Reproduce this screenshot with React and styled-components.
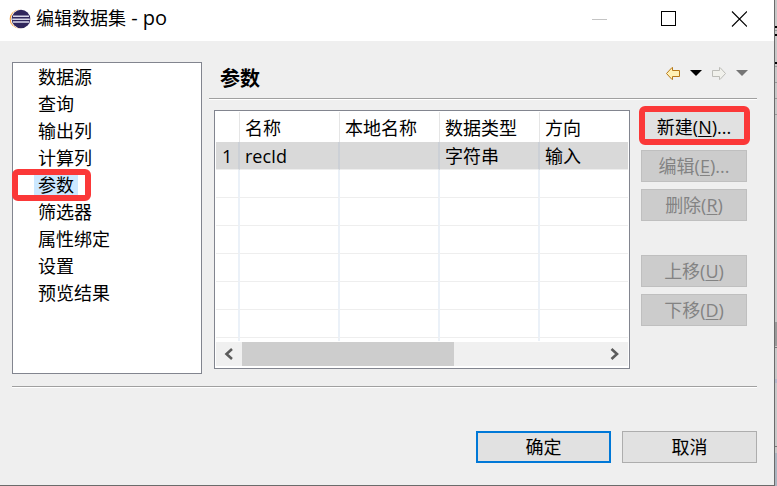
import React from 'react';
import styled, { createGlobalStyle, css } from 'styled-components';

const GlobalStyle = createGlobalStyle`
  *, *::before, *::after { box-sizing: border-box; }
  body {
    margin: 0;
    background: #c8c8c8;
    color: #000;
    font: 18px/24px "Open Sans", "Noto Sans CJK SC", sans-serif;
  }
  button { font: inherit; color: inherit; margin: 0; padding: 0; }
  ul { list-style: none; margin: 0; padding: 0; }
  u { text-underline-offset: 2px; text-decoration-thickness: 1px; }
`;

const Screen = styled.div`
  display: flex;
  min-height: 100vh;
`;

const Dialog = styled.section`
  flex: 1;
  min-width: 0;
  display: flex;
  flex-direction: column;
  background: #efefef;
  border: solid #6b6b6b;
  border-width: 0 1px 1px 0;
`;

const Backdrop = styled.div`
  width: 2px;
  background: linear-gradient(
    #c8c8c8 26px, #000 26px 28px, #c8c8c8 28px 30px, #999 30px 31px,
    #c8c8c8 31px 34px, #000 34px 36px, #c8c8c8 36px 62px, #000 62px 64px,
    #c8c8c8 64px 66px, #999 66px 67px, #c8c8c8 67px 82px, #999 82px 83px,
    #c8c8c8 83px 98px, #999 98px 99px, #c8c8c8 99px 114px, #999 114px 115px,
    #c8c8c8 115px 322px, #999 322px 346px, #c8c8c8 346px 347px, #777 347px 348px,
    #c8c8c8 348px 379px, #b4b8cc 379px 383px, #c8c8c8 383px 446px,
    #777 446px 447px, #c8c8c8 447px 453px, #abb5c0 453px
  );
`;

const TitleBar = styled.header`
  display: flex;
  align-items: center;
  height: 41px;
  padding: 0 27px 4px 9px;
  background: #fff;
`;

const TitleText = styled.h1`
  flex: 1;
  margin: 0 0 0 5px;
  padding-bottom: 2px;
  font-size: 18px;
  font-weight: 400;
`;

const DataSetName = styled.span`
  font-size: 20px;
  white-space: pre;
`;

const WindowControls = styled.div`
  display: flex;
  align-items: center;
  gap: 40px;
`;

const IconButton = styled.button`
  display: block;
  border: 0;
  background: none;
  line-height: 0;
  svg { display: block; }
`;

const Content = styled.div`
  flex: 1;
  display: flex;
  padding: 0 17px 12px 12px;
`;

const PageList = styled.ul`
  width: 190px;
  margin-top: 21px;
  padding: 1px 0 14px 21px;
  background: #fff;
  border: 1px solid #82858f;
`;

const highlight = css`
  &::after {
    content: '';
    position: absolute;
    border: 6px solid #fb3838;
    border-radius: 6px;
    pointer-events: none;
  }
`;

const PageItem = styled.button`
  display: block;
  position: relative;
  height: 27px;
  padding: 0 4px 1px;
  border: 0;
  background: ${(p) => (p.$selected ? '#cce8ff' : 'none')};
  ${(p) => p.$selected && highlight}
  &::after { inset: -3px -13px -2px -22px; }
`;

const Panel = styled.main`
  flex: 1;
  min-width: 0;
  margin-left: 7px;
  display: flex;
  flex-direction: column;
`;

const PanelHeader = styled.div`
  display: flex;
  align-items: center;
  justify-content: space-between;
  height: 59px;
  padding: 18px 9px 0 11px;
  border-bottom: 1px solid #fff;
  box-shadow: inset 0 -1px #a0a0a0;
`;

const PanelTitle = styled.h2`
  margin: 0;
  font-size: 20px;
  font-weight: 700;
`;

const History = styled.div`
  display: flex;
  align-items: center;
  gap: 10px;
  margin-bottom: 12px;
`;

const PanelBody = styled.div`
  flex: 1;
  display: flex;
  gap: 11px;
  padding: 10px 10px 5px 5px;
`;

const Grid = styled.div`
  flex: 1;
  min-width: 0;
  display: flex;
  flex-direction: column;
  justify-content: space-between;
  padding: 1px 1px 2px;
  background: #fff;
  border: 1px solid #82858f;
`;

const Table = styled.table`
  width: 100%;
  table-layout: fixed;
  border-collapse: separate;
  border-spacing: 0;
`;

const Col = styled.col`
  width: ${(p) => (p.$width ? `${p.$width}px` : 'auto')};
`;

const HeadCell = styled.th`
  height: 30px;
  padding: 1px 0 0 5px;
  font-weight: 400;
  text-align: left;
  white-space: nowrap;
  border-right: 1px solid #e5e5e5;
  &:last-child { border-right: 0; }
`;

const Cell = styled.td`
  height: ${(p) => (p.$filler ? 3 : 28)}px;
  padding: 0 0 0 5px;
  background: ${(p) => (p.$selected ? '#d9d9d9' : '#fff')};
  border-right: 2px solid ${(p) => (p.$selected ? '#ccd0d6' : '#ebf1f8')};
  border-bottom: ${(p) => (p.$filler ? 0 : 1)}px solid #eee;
  white-space: nowrap;
  &:first-child { padding-left: 6px; }
  &:last-child { border-right: 0; }
`;

const ScrollBar = styled.div`
  display: flex;
  align-items: center;
  height: 24px;
  background: #f0f0f0;
`;

const ScrollArrow = styled(IconButton)`
  width: 26px;
  height: 24px;
  display: flex;
  align-items: center;
  justify-content: center;
`;

const Track = styled.div`
  flex: 1;
  height: 24px;
`;

const Thumb = styled.div`
  width: 59%;
  height: 24px;
  background: #cdcdcd;
`;

const Actions = styled.div`
  display: flex;
  flex-direction: column;
  gap: 7px;
  width: 106px;
  padding-top: 1px;
`;

const PushButton = styled.button`
  position: relative;
  height: 32px;
  width: ${(p) => (p.$wide ? '135px' : 'auto')};
  background: #e1e1e1;
  border: ${(p) => (p.$primary ? '2px solid #0078d7' : '1px solid #adadad')};
  &:disabled {
    background: #ccc;
    border-color: #bfbfbf;
    color: #838383;
  }
  ${(p) => p.$marked && highlight}
  &::after { inset: -6px -4px -3px -3px; }
`;

const ActionGap = styled.div`
  height: 20px;
`;

const Footer = styled.footer`
  display: flex;
  justify-content: flex-end;
  gap: 11px;
  margin: 0 17px 0 12px;
  padding: 44px 0 22px;
  border-top: 1px solid #a0a0a0;
  box-shadow: inset 0 1px #fff;
`;

const EclipseLogo = () => (
  <svg width="22" height="20" viewBox="0 0 22 20" aria-hidden="true">
    <circle cx="10" cy="10" r="9.3" fill="#f5952a" />
    <circle cx="11.3" cy="10" r="9.6" fill="#fff" />
    <circle cx="12" cy="10" r="9.3" fill="#30265c" />
    <path d="M4 7.3h16M3.2 10.2h17.6M4 13.1h16" stroke="#d9d7ea" strokeWidth="1.5" />
  </svg>
);

const HistoryArrow = ({ forward }) => (
  <svg width="14" height="13" viewBox="0 0 14 13" aria-hidden="true">
    <path
      d={forward ? 'M13.5 6.5l-5.5-6h-.5v3h-7v6h7v3H8z' : 'M.5 6.5L6 .5h.5v3h7v6h-7v3H6z'}
      fill={forward ? '#f1f1ec' : '#fff0b4'}
      stroke={forward ? '#bdbdb8' : '#b67818'}
    />
  </svg>
);

const Caret = ({ color }) => (
  <svg width="12" height="6" viewBox="0 0 12 6" aria-hidden="true">
    <path d="M0 0h12L6 6z" fill={color} />
  </svg>
);

const Chevron = ({ right }) => (
  <svg width="10" height="12" viewBox="0 0 10 12" aria-hidden="true">
    <path
      d={right ? 'M1.5 1l5.5 5-5.5 5' : 'M8 1L2.5 6 8 11'}
      fill="none"
      stroke="#5c5c5c"
      strokeWidth="2.6"
    />
  </svg>
);

const pages = ['数据源', '查询', '输出列', '计算列', '参数', '筛选器', '属性绑定', '设置', '预览结果'];
const columns = ['', '名称', '本地名称', '数据类型', '方向'];
const widths = [24, 100, 100, 100, 0];
const parameter = ['1', 'recId', '', '字符串', '输入'];
const emptyRows = [1, 2, 3, 4, 5, 6];

export default function App() {
  return (
    <>
      <GlobalStyle />
      <Screen>
        <Dialog role="dialog" aria-labelledby="dialog-title">
          <TitleBar>
            <EclipseLogo />
            <TitleText id="dialog-title">编辑数据集<DataSetName> - po</DataSetName></TitleText>
            <WindowControls>
              <IconButton aria-label="最小化" disabled>
                <svg width="29" height="16"><path d="M0 8.5h15" stroke="#c4c4c4" /></svg>
              </IconButton>
              <IconButton aria-label="最大化">
                <svg width="15" height="15"><rect x=".5" y=".5" width="14" height="14" fill="none" stroke="#000" /></svg>
              </IconButton>
              <IconButton aria-label="关闭">
                <svg width="31" height="16"><path d="M16 .5l15 15M31 .5l-15 15" stroke="#000" strokeWidth="1.1" /></svg>
              </IconButton>
            </WindowControls>
          </TitleBar>

          <Content>
            <PageList>
              {pages.map((page) => (
                <li key={page}>
                  <PageItem type="button" $selected={page === '参数'}>{page}</PageItem>
                </li>
              ))}
            </PageList>

            <Panel>
              <PanelHeader>
                <PanelTitle>参数</PanelTitle>
                <History>
                  <IconButton aria-label="后退"><HistoryArrow /></IconButton>
                  <IconButton aria-label="后退历史"><Caret color="#000" /></IconButton>
                  <IconButton aria-label="前进" disabled><HistoryArrow forward /></IconButton>
                  <IconButton aria-label="前进历史" disabled><Caret color="#757575" /></IconButton>
                </History>
              </PanelHeader>

              <PanelBody>
                <Grid>
                  <Table aria-label="参数">
                    <colgroup>
                      {widths.map((width, i) => <Col key={i} $width={width} />)}
                    </colgroup>
                    <thead>
                      <tr>{columns.map((name, i) => <HeadCell key={i}>{name}</HeadCell>)}</tr>
                    </thead>
                    <tbody>
                      <tr>{parameter.map((value, i) => <Cell key={i} $selected>{value}</Cell>)}</tr>
                      {emptyRows.map((row) => (
                        <tr key={row}>{columns.map((_, i) => <Cell key={i} />)}</tr>
                      ))}
                      <tr>{columns.map((_, i) => <Cell key={i} $filler />)}</tr>
                    </tbody>
                  </Table>
                  <ScrollBar>
                    <ScrollArrow aria-label="向左滚动"><Chevron /></ScrollArrow>
                    <Track><Thumb /></Track>
                    <ScrollArrow aria-label="向右滚动"><Chevron right /></ScrollArrow>
                  </ScrollBar>
                </Grid>

                <Actions>
                  <PushButton type="button" $marked>新建(<u>N</u>)...</PushButton>
                  <PushButton type="button" disabled>编辑(<u>E</u>)...</PushButton>
                  <PushButton type="button" disabled>删除(<u>R</u>)</PushButton>
                  <ActionGap />
                  <PushButton type="button" disabled>上移(<u>U</u>)</PushButton>
                  <PushButton type="button" disabled>下移(<u>D</u>)</PushButton>
                </Actions>
              </PanelBody>
            </Panel>
          </Content>

          <Footer>
            <PushButton type="button" $wide $primary>确定</PushButton>
            <PushButton type="button" $wide>取消</PushButton>
          </Footer>
        </Dialog>
        <Backdrop />
      </Screen>
    </>
  );
}
